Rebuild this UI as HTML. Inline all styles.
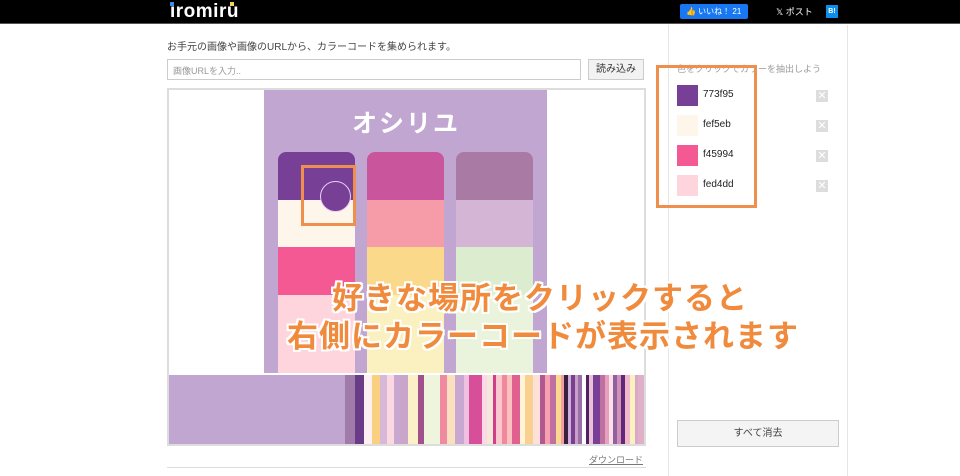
<!DOCTYPE html>
<html><head><meta charset="utf-8"><style>
*{margin:0;padding:0;box-sizing:border-box}
body{width:960px;height:476px;background:#fff;position:relative;overflow:hidden;font-family:"Liberation Sans","Noto Sans CJK JP",sans-serif;color:#333}
.a{position:absolute}
#hd{left:0;top:0;width:960px;height:24px;background:#000;border-bottom:1px solid #555}
.sw{width:21px;height:21px}
.x{width:12px;height:12px;background:#ddd;color:#fff;font-size:11px;line-height:12px;text-align:center}
.ov{font-size:31px;font-weight:bold;color:#f08a3c;text-shadow:2px 0 #fff,-2px 0 #fff,0 2px #fff,0 -2px #fff,2px 2px #fff,-2px -2px #fff,2px -2px #fff,-2px 2px #fff;white-space:nowrap;letter-spacing:1px}
#strip{left:169px;top:375px;width:475px;height:69px;display:flex}
#strip div{height:100%}
#st{flex:1;display:flex}
#st div{flex-basis:0;min-width:0}
</style></head><body>
<div class="a" id="hd"></div>
<div class="a" style="left:170px;top:1px;color:#fff;font-size:19px;font-weight:bold;letter-spacing:0.5px">iromiru</div>
<div class="a" style="left:170px;top:2px;width:4px;height:4px;background:#3a8ee6"></div>
<div class="a" style="left:230px;top:2px;width:4px;height:4px;background:#f5d060"></div>
<div class="a" style="left:680px;top:4px;width:68px;height:15px;background:#1877f2;color:#fff;font-size:8px;line-height:15px;padding-left:6px;border-radius:2px">👍 いいね！ 21</div>
<div class="a" style="left:776px;top:5px;color:#fff;font-size:9px">𝕏 ポスト</div>
<div class="a" style="left:826px;top:5px;width:12px;height:13px;background:#0d8ee9;color:#fff;font-size:7px;text-align:center;line-height:13px;font-weight:bold">B!</div>

<div class="a" style="left:668px;top:25px;width:1px;height:451px;background:#e5e5e5"></div>
<div class="a" style="left:847px;top:25px;width:1px;height:451px;background:#e5e5e5"></div>

<div class="a" style="left:167px;top:38px;font-size:10px;color:#444">お手元の画像や画像のURLから、カラーコードを集められます。</div>
<div class="a" style="left:167px;top:59px;width:414px;height:21px;border:1px solid #ccc;font-size:9px;color:#999;padding:4px 5px">画像URLを入力..</div>
<div class="a" style="left:588px;top:59px;width:56px;height:21px;border:1px solid #ccc;background:#f2f2f2;font-size:10px;text-align:center;line-height:19px">読み込み</div>

<div class="a" style="left:167px;top:88px;width:479px;height:358px;border:2px solid #ddd;background:#fff"></div>
<div class="a" style="left:264px;top:90px;width:283px;height:283px;background:#c0a6d0"></div>
<div class="a" style="left:352px;top:104px;color:#fff;font-size:25px;font-weight:bold;letter-spacing:2px">オシリユ</div>
<div class="a" style="left:278px;top:152px;width:77px;height:221px;border-radius:8px 8px 0 0;overflow:hidden">
 <div style="height:48px;background:#773f95"></div><div style="height:47px;background:#fef5eb"></div><div style="height:48px;background:#f45994"></div><div style="height:78px;background:#fed4dd"></div></div>
<div class="a" style="left:367px;top:152px;width:77px;height:221px;border-radius:8px 8px 0 0;overflow:hidden">
 <div style="height:48px;background:#c9559c"></div><div style="height:47px;background:#f59ca8"></div><div style="height:48px;background:#fbd98a"></div><div style="height:78px;background:#fbf0c0"></div></div>
<div class="a" style="left:456px;top:152px;width:77px;height:221px;border-radius:8px 8px 0 0;overflow:hidden">
 <div style="height:48px;background:#a97aa3"></div><div style="height:47px;background:#d4b5d6"></div><div style="height:48px;background:#dceccf"></div><div style="height:78px;background:#eaf3dc"></div></div>
<div class="a" style="left:320px;top:181px;width:31px;height:31px;border-radius:50%;background:#773f95;border:1px solid #e8d0f0"></div>
<div class="a" style="left:301px;top:165px;width:55px;height:61px;border:3px solid #ee8f4e"></div>

<div class="a" id="strip">
<div style="width:176px;background:#c0a6d0"></div>
<div id="st">
<div style="flex-grow:8;background:#a07aa8"></div><div style="flex-grow:8;background:#6a3c88"></div><div style="flex-grow:7;background:#fdf0f3"></div><div style="flex-grow:6;background:#f9d080"></div><div style="flex-grow:6;background:#d8b8d8"></div><div style="flex-grow:6;background:#fcd8e0"></div><div style="flex-grow:5;background:#c8a8d0"></div><div style="flex-grow:7;background:#c9a6c9"></div><div style="flex-grow:8;background:#fbf0c8"></div><div style="flex-grow:5;background:#a0508a"></div><div style="flex-grow:14;background:#eef5dc"></div><div style="flex-grow:6;background:#f08aa0"></div><div style="flex-grow:6;background:#fbe0c0"></div><div style="flex-grow:8;background:#c8a8d0"></div><div style="flex-grow:4;background:#f0c0e0"></div><div style="flex-grow:11;background:#d64f98"></div><div style="flex-grow:4;background:#fcd8e8"></div><div style="flex-grow:5;background:#f4e8d8"></div><div style="flex-grow:3;background:#d0408a"></div><div style="flex-grow:5;background:#fcc8d0"></div><div style="flex-grow:4;background:#f08a9a"></div><div style="flex-grow:4;background:#fbc0c0"></div><div style="flex-grow:7;background:#e06090"></div><div style="flex-grow:4;background:#fff4d8"></div><div style="flex-grow:7;background:#fad090"></div><div style="flex-grow:6;background:#fde0d8"></div><div style="flex-grow:4;background:#b05890"></div><div style="flex-grow:4;background:#f8a0b0"></div><div style="flex-grow:5;background:#c070a0"></div><div style="flex-grow:4;background:#fbd890"></div><div style="flex-grow:3;background:#f0a0a0"></div><div style="flex-grow:3;background:#3a2040"></div><div style="flex-grow:3;background:#d0b0d8"></div><div style="flex-grow:3;background:#7a4090"></div><div style="flex-grow:3;background:#c8a0c8"></div><div style="flex-grow:3;background:#9a70a8"></div><div style="flex-grow:3;background:#fff"></div><div style="flex-grow:3;background:#502060"></div><div style="flex-grow:3;background:#e8c0d8"></div><div style="flex-grow:6;background:#773f95"></div><div style="flex-grow:4;background:#c070a0"></div><div style="flex-grow:4;background:#e8a0c0"></div><div style="flex-grow:3;background:#fce0e8"></div><div style="flex-grow:3;background:#9060a0"></div><div style="flex-grow:4;background:#d090b8"></div><div style="flex-grow:3;background:#602878"></div><div style="flex-grow:4;background:#f0b8c8"></div><div style="flex-grow:4;background:#fbf0c0"></div><div style="flex-grow:3;background:#d8a8c8"></div><div style="flex-grow:5;background:#e0b0c8"></div>
</div></div>

<div class="a" style="left:589px;top:453px;font-size:9px;color:#777;text-decoration:underline">ダウンロード</div>
<div class="a" style="left:167px;top:467px;width:479px;height:1px;background:#ddd"></div>

<div class="a" style="left:677px;top:62px;font-size:9px;color:#999">色をクリックでカラーを抽出しよう</div>
<div class="a sw" style="left:677px;top:85px;background:#773f95"></div><div class="a" style="left:703px;top:89px;font-size:10px;color:#222">773f95</div>
<div class="a sw" style="left:677px;top:115px;background:#fef5eb"></div><div class="a" style="left:703px;top:119px;font-size:10px;color:#222">fef5eb</div>
<div class="a sw" style="left:677px;top:145px;background:#f45994"></div><div class="a" style="left:703px;top:149px;font-size:10px;color:#222">f45994</div>
<div class="a sw" style="left:677px;top:175px;background:#fed4dd"></div><div class="a" style="left:703px;top:179px;font-size:10px;color:#222">fed4dd</div>
<div class="a x" style="left:816px;top:90px">✕</div><div class="a x" style="left:816px;top:120px">✕</div><div class="a x" style="left:816px;top:150px">✕</div><div class="a x" style="left:816px;top:180px">✕</div>
<div class="a" style="left:656px;top:65px;width:101px;height:143px;border:3px solid #ee8f4e"></div>

<div class="a" style="left:677px;top:420px;width:162px;height:27px;border:1px solid #ccc;background:#f4f4f4;font-size:10px;text-align:center;line-height:25px;color:#444">すべて消去</div>

<div class="a ov" style="left:332px;top:273px">好きな場所をクリックすると</div>
<div class="a ov" style="left:287px;top:311px">右側にカラーコードが表示されます</div>
</body></html>
